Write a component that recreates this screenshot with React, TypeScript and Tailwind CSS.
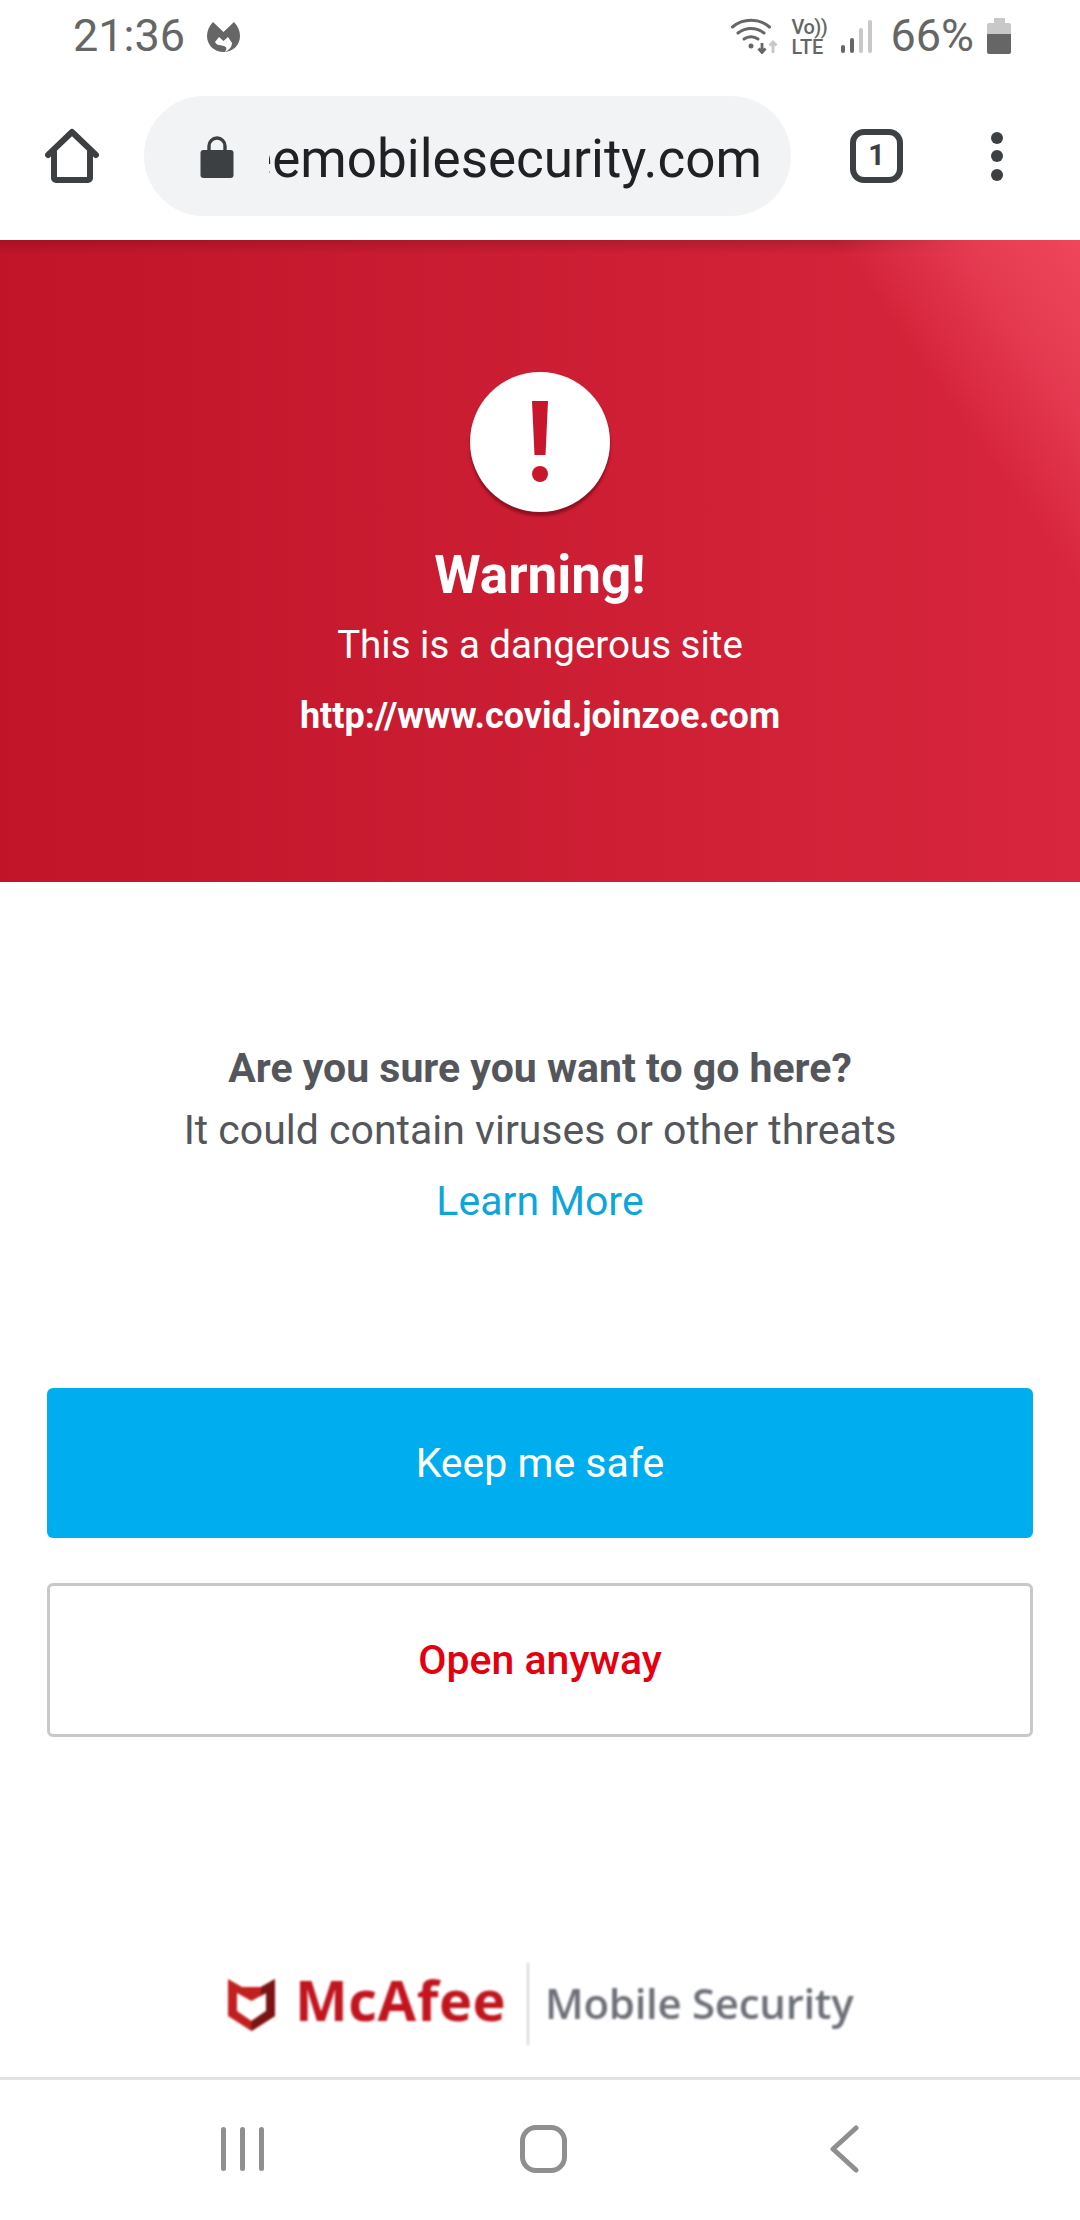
const roboto = "font-['Roboto',sans-serif]";

function StatusBar() {
  return (
    <div className="flex h-[68px] items-start justify-between pl-[73px] pr-[69px] pt-[10px] text-[#666666]">
      <div className="flex items-center gap-[22px]">
        <span className="text-[45px] leading-[52px]">21:36</span>
        <svg width="33" height="31" viewBox="0 0 33 31" className="mt-[2px]">
          <path d="M6 0 L16.5 10 L27 0 C31 4 33 9 33 14 C33 23 26 30 16.5 30 C7 30 0 23 0 14 C0 9 2 4 6 0 Z" fill="#666666" />
          <path d="M8 20 L12 15 L16.5 19 L21 15 L25 21 C25 25 22 28 18 30 C20 27 20 25 17 24 C14 23 10 24 8 20 Z" fill="#ffffff" />
        </svg>
      </div>
      <div className="flex items-start">
        <svg width="48" height="37" viewBox="0 0 48 37" className="mt-[7px]">
          <g fill="none" stroke="#666666" strokeWidth="3" strokeLinecap="round">
            <path d="M1.5 10 C12 1 28 1 38.5 10" />
            <path d="M7 16 C15 10 25 10 33 16" />
            <path d="M13 22 C17 19 23 19 27 22" />
          </g>
          <circle cx="20" cy="29" r="2.5" fill="#666666" />
          <path d="M31 26 V35 M27.5 31.5 L31 35.5 L34.5 31.5" fill="none" stroke="#666666" strokeWidth="2.8" />
          <path d="M42 36 V25 M38.5 28.5 L42 25 L45.5 28.5" fill="none" stroke="#c8c8c8" strokeWidth="2.8" />
        </svg>
        <div className="ml-[13px] mt-[7px] flex w-[35px] flex-col text-[20px] font-medium leading-[20px]">
          <span className="tracking-[-0.5px]">Vo))</span>
          <span>LTE</span>
        </div>
        <div className="ml-[14px] mt-[10px] flex h-[33px] items-end gap-[5.3px]">
          <span className="h-[8px] w-[4px] rounded-full bg-[#666666]" />
          <span className="h-[15px] w-[4px] rounded-full bg-[#666666]" />
          <span className="h-[25px] w-[4px] rounded-full bg-[#c8c8c8]" />
          <span className="h-[33px] w-[4px] rounded-full bg-[#c8c8c8]" />
        </div>
        <span className="ml-[18px] text-[45px] leading-[52px]">66%</span>
        <div className="ml-[13px] mt-[8px] flex w-[24px] flex-col items-center">
          <span className="h-[5px] w-[11px] rounded-t-[1px] bg-[#c8c8c8]" />
          <span className="h-[11px] w-full rounded-t-[2px] bg-[#c8c8c8]" />
          <span className="h-[20px] w-full rounded-b-[2px] bg-[#666666]" />
        </div>
      </div>
    </div>
  );
}

function Toolbar() {
  return (
    <div className="flex h-[172px] items-start pt-[28px]">
      <div className="flex h-[120px] w-[144px] items-center justify-center">
        <svg width="54" height="56" viewBox="0 0 54 56">
          <path d="M9 24 V50 A2 2 0 0 0 11 52 H43 A2 2 0 0 0 45 50 V24 M3 27 L27 4 L51 27" fill="none" stroke="#3c4043" strokeWidth="6" strokeLinecap="round" strokeLinejoin="round" />
        </svg>
      </div>
      <div className="flex h-[120px] w-[647px] items-center rounded-full bg-[#f1f3f4] pl-[56px] pr-[29px]">
        <svg width="34" height="43" viewBox="0 0 34 43" className="shrink-0">
          <path d="M9 17 V11 A8 8 0 0 1 25 11 V17" fill="none" stroke="#3c4043" strokeWidth="3.4" />
          <rect x="0.5" y="15" width="33" height="28" rx="3" fill="#3c4043" />
        </svg>
        <div className="ml-[35px] mt-[5px] flex min-w-0 flex-1 justify-end overflow-hidden whitespace-nowrap text-[53px] leading-[66px] text-[#202124]">
          <span>mcafeemobilesecurity.com</span>
        </div>
      </div>
      <div className="flex h-[120px] flex-1 items-center pl-[59px]">
        <div className="flex h-[54px] w-[53px] items-center justify-center rounded-[14px] border-[6px] border-[#3c4043] text-[29px] font-bold text-[#3c4043]">
          1
        </div>
        <div className="ml-[88px] flex flex-col gap-[6.5px]">
          <span className="size-[12px] rounded-full bg-[#3c4043]" />
          <span className="size-[12px] rounded-full bg-[#3c4043]" />
          <span className="size-[12px] rounded-full bg-[#3c4043]" />
        </div>
      </div>
    </div>
  );
}

function Hero() {
  return (
    <div className="relative flex h-[642px] flex-col items-center overflow-hidden bg-gradient-to-r from-[#c11429] to-[#d7263d] pt-[132px] text-white">
      <div className="absolute inset-x-0 top-0 h-[14px] bg-gradient-to-b from-[#00000026] to-transparent" />
      <div className="absolute inset-0 bg-[linear-gradient(235deg,#f0465c_0%,#e63c52_7%,#d7263d00_16%)]" />
      <div className="relative flex size-[140px] items-center justify-center rounded-full bg-white shadow-[0_4px_3px_#8e1020]">
        <svg width="18" height="82" viewBox="0 0 18 82">
          <path d="M1 0 H17 L14.5 54 H3.5 Z" fill="#c8172d" />
          <circle cx="9" cy="73" r="8" fill="#c8172d" />
        </svg>
      </div>
      <div className="relative mt-[32px] text-[53px] font-bold leading-[62px]">Warning!</div>
      <div className="relative mt-[16px] text-[38.5px] leading-[46px]">This is a dangerous site</div>
      <div className="relative mt-[25px] text-[36px] font-bold leading-[46px]">http://www.covid.joinzoe.com</div>
    </div>
  );
}

function Footer() {
  return (
    <div className="flex h-[138px] items-center pb-[8px] pl-[228px] blur-[0.8px]">
      <svg width="47" height="52" viewBox="0 0 47 52" className="mt-[2px]">
        <path fillRule="evenodd" d="M0 0 L14 8 H33 L47 0 V37 L23.5 52 L0 37 Z M9 14 V32 L23.5 42 L38 32 V14 L23.5 22 Z" fill="#c1201f" />
        <path d="M33 8 L47 0 V37 L23.5 52 V42 L38 32 V14 L33 17 Z" fill="#7a1414" />
      </svg>
      <span className="ml-[20px] mt-[-10px] font-['Open_Sans',sans-serif] text-[56px] font-bold leading-[60px] tracking-[0.5px] text-[#c1151f]">
        McAfee
      </span>
      <span className="ml-[21px] h-[82px] w-[2px] bg-[#d4d4d4]" />
      <span className="ml-[16px] mt-[-2px] font-['Open_Sans',sans-serif] text-[42px] font-semibold leading-[60px] tracking-[-0.3px] text-[#6d7078]">
        Mobile Security
      </span>
    </div>
  );
}

function NavBar() {
  return (
    <div className="flex h-[143px] items-start border-t-[3px] border-[#e2e2e2] pl-[221px] pt-[47px]">
      <div className="flex h-[44px] gap-[14px]">
        <span className="w-[5px] rounded-full bg-[#8f8f8f]" />
        <span className="w-[5px] rounded-full bg-[#8f8f8f]" />
        <span className="w-[5px] rounded-full bg-[#8f8f8f]" />
      </div>
      <div className="ml-[256px] mt-[-2px] h-[48px] w-[47px] rounded-[16px] border-[5px] border-[#8f8f8f]" />
      <svg width="30" height="48" viewBox="0 0 30 48" className="ml-[262px] mt-[-2px]">
        <path d="M27 3 L4 24 L27 45" fill="none" stroke="#8f8f8f" strokeWidth="5" strokeLinecap="round" strokeLinejoin="round" />
      </svg>
    </div>
  );
}

export default function App() {
  return (
    <div className={`flex h-[2220px] w-[1080px] flex-col bg-white ${roboto}`}>
      <StatusBar />
      <Toolbar />
      <Hero />
      <div className="flex flex-1 flex-col items-center pt-[162px] text-[41px] leading-[48px] text-[#54565b]">
        <div className="font-bold">Are you sure you want to go here?</div>
        <div className="mt-[14px]">It could contain viruses or other threats</div>
        <div className="mt-[23px] text-[#0ea5dc]">Learn More</div>
        <div className="mt-[163px] flex h-[150px] w-[986px] items-center justify-center rounded-[6px] bg-[#00aeef] text-[41px] text-white">
          Keep me safe
        </div>
        <div className="mt-[45px] flex h-[154px] w-[986px] items-center justify-center rounded-[6px] border-[3px] border-[#c8c8c8] text-[41px] font-medium text-[#e3000f]">
          Open anyway
        </div>
      </div>
      <Footer />
      <NavBar />
    </div>
  );
}
